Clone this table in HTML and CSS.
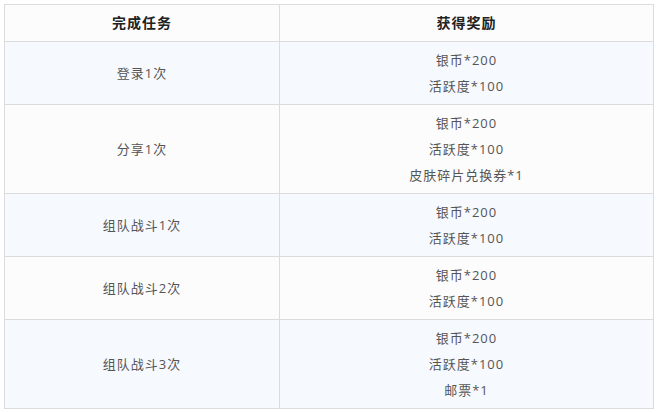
FILE: index.html
```html
<!DOCTYPE html>
<html lang="zh-CN">
<head>
<meta charset="utf-8">
<title>任务奖励</title>
<link rel="stylesheet" href="styles.css">
</head>
<body>
<table class="reward-table">
  <thead>
    <tr>
      <th class="col-task">完成任务</th>
      <th class="col-reward">获得奖励</th>
    </tr>
  </thead>
  <tbody>
    <tr class="row-odd">
      <td>登录1次</td>
      <td><div>银币*200</div><div>活跃度*100</div></td>
    </tr>
    <tr class="row-even">
      <td>分享1次</td>
      <td><div>银币*200</div><div>活跃度*100</div><div>皮肤碎片兑换券*1</div></td>
    </tr>
    <tr class="row-odd">
      <td>组队战斗1次</td>
      <td><div>银币*200</div><div>活跃度*100</div></td>
    </tr>
    <tr class="row-even">
      <td>组队战斗2次</td>
      <td><div>银币*200</div><div>活跃度*100</div></td>
    </tr>
    <tr class="row-odd">
      <td>组队战斗3次</td>
      <td><div>银币*200</div><div>活跃度*100</div><div>邮票*1</div></td>
    </tr>
  </tbody>
</table>
</body>
</html>
```

FILE: styles.css
```css
html, body {
  margin: 0;
  padding: 0;
  background: #ffffff;
}

body {
  padding: 4px 0 0 4px;
  font-family: "Open Sans", "Noto Sans CJK SC", sans-serif;
}

.reward-table {
  width: 650px;
  border-collapse: collapse;
  table-layout: fixed;
}

.reward-table th,
.reward-table td {
  border: 1px solid #dcdcdc;
  padding: 5px 10px;
  text-align: center;
  vertical-align: middle;
  line-height: 26px;
  letter-spacing: 1px;
}

.reward-table th {
  background: #fcfcfc;
  color: #222222;
  font-size: 14px;
  font-weight: bold;
}

.col-task {
  width: 254px;
}

.reward-table td {
  font-size: 13px;
  color: #555555;
}

.row-odd td {
  background: #f6f9fe;
}

.row-even td {
  background: #fcfcfc;
}
```
